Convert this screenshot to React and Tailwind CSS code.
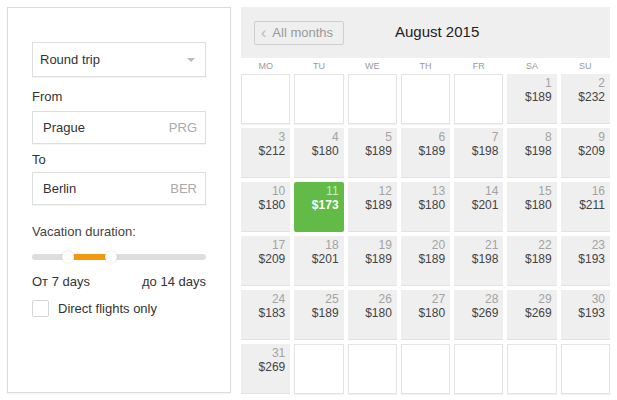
import React from "react"

const prices = {
  1: 189, 2: 232,
  3: 212, 4: 180, 5: 189, 6: 189, 7: 198, 8: 198, 9: 209,
  10: 180, 11: 173, 12: 189, 13: 180, 14: 201, 15: 180, 16: 211,
  17: 209, 18: 201, 19: 189, 20: 189, 21: 198, 22: 189, 23: 193,
  24: 183, 25: 189, 26: 180, 27: 180, 28: 269, 29: 269, 30: 193,
  31: 269,
}

const weekdays = ["MO", "TU", "WE", "TH", "FR", "SA", "SU"]

// August 2015 begins on a Saturday: 5 blanks before, 6 after
const cells = [
  ...Array(5).fill(null),
  ...Array.from({ length: 31 }, (_, i) => i + 1),
  ...Array(6).fill(null),
]

function Field({ value, code }) {
  return (
    <div className="h-[33px] border border-[#dedede] shadow-[0_1px_1px_rgba(0,0,0,0.04)] flex items-center justify-between pl-[10px] pr-[8px]">
      <span className="text-[13px] text-[#333]">{value}</span>
      <span className="text-[13px] text-[#aaa]">{code}</span>
    </div>
  )
}

function Sidebar() {
  return (
    <div className="w-[224px] h-[386px] border border-[#dcdcdc] px-[24px] pt-[34px] shadow-[0_1px_2px_rgba(0,0,0,0.06)]">
      <div className="h-[35px] border border-[#dedede] shadow-[0_1px_1px_rgba(0,0,0,0.04)] flex items-center justify-between pl-[7px] pr-[10px]">
        <span className="text-[13px] text-[#333]">Round trip</span>
        <span className="w-0 h-0 border-l-[4px] border-r-[4px] border-t-[4px] border-l-transparent border-r-transparent border-t-[#bbb]" />
      </div>

      <div className="mt-[12px] mb-[6px] leading-[16px] text-[13px] text-[#333]">From</div>
      <Field value="Prague" code="PRG" />

      <div className="mt-[8px] mb-[4px] leading-[16px] text-[13px] text-[#333]">To</div>
      <Field value="Berlin" code="BER" />

      <div className="mt-[19px] leading-[16px] text-[13px] text-[#444]">Vacation duration:</div>

      <div className="relative mt-[14px] h-[6px] bg-[#ddd] rounded-full">
        <div className="absolute left-[42px] w-[32px] h-[6px] bg-[#f29a0e]" />
        <div className="absolute left-[30px] top-[-3px] w-[12px] h-[12px] rounded-full bg-white shadow-[0_0_2px_rgba(0,0,0,0.2)]" />
        <div className="absolute left-[73px] top-[-3px] w-[12px] h-[12px] rounded-full bg-white shadow-[0_0_2px_rgba(0,0,0,0.2)]" />
      </div>

      <div className="mt-[14px] flex justify-between leading-[16px] text-[13px] text-[#333]">
        <span>От 7 days</span>
        <span>до 14 days</span>
      </div>

      <label className="mt-[9px] flex items-center gap-[9px]">
        <span className="w-[17px] h-[17px] border border-[#d6d6d6] rounded-[2px] bg-white" />
        <span className="text-[13px] text-[#333]">Direct flights only</span>
      </label>
    </div>
  )
}

function DayCell({ day }) {
  if (!day) {
    return <div className="h-[50px] bg-white border border-[#e4e4e4] shadow-[0_1px_1px_rgba(0,0,0,0.05)]" />
  }
  const best = day === 11
  return (
    <div
      className={
        best
          ? "h-[50px] bg-[#62bb46] rounded-[2px] pt-[2px] pr-[5px] text-right leading-[14px] text-[12px]"
          : "h-[50px] bg-[#efefef] border-b border-[#e2e2e2] pt-[2px] pr-[5px] text-right leading-[14px] text-[12px]"
      }
    >
      <div className={best ? "text-[#c9ecb8]" : "text-[#a3a3a3]"}>{day}</div>
      <div className={best ? "text-white font-bold" : "text-[#444]"}>${prices[day]}</div>
    </div>
  )
}

function Calendar() {
  return (
    <div className="w-[369px]">
      <div className="h-[51px] bg-[#efefef] flex items-center pl-[13px]">
        <button className="h-[24px] w-[90px] border border-[#cfcfcf] rounded-[2px] flex items-center gap-[6px] pl-[6px] text-[13px] text-[#999]">
          <span className="text-[16px] leading-none text-[#bbb]">‹</span>
          <span>All months</span>
        </button>
        <span className="ml-[51px] text-[15px] text-[#222]">August 2015</span>
      </div>

      <div className="grid grid-cols-7 gap-x-[4px] h-[16px]">
        {weekdays.map((d) => (
          <div key={d} className="text-center text-[9px] leading-[16px] text-[#999]">{d}</div>
        ))}
      </div>

      <div className="grid grid-cols-7 gap-[4px]">
        {cells.map((day, i) => (
          <DayCell key={i} day={day} />
        ))}
      </div>
    </div>
  )
}

export default function App() {
  return (
    <div
      className="w-[617px] h-[400px] overflow-hidden bg-white flex gap-[10px] pl-[7px] pt-[7px]"
      style={{ fontFamily: "'Liberation Sans', Arial, sans-serif" }}
    >
      <Sidebar />
      <Calendar />
    </div>
  )
}
